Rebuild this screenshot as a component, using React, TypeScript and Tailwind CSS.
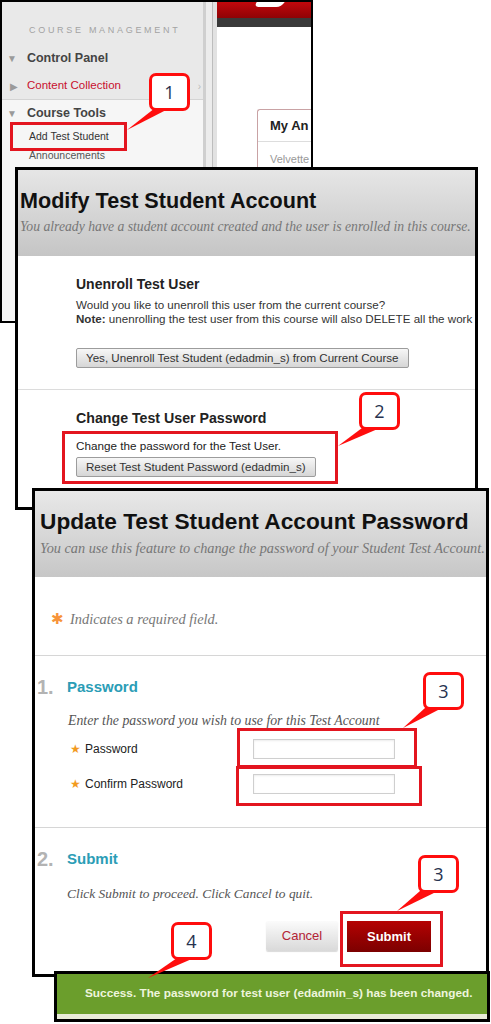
import React from "react";

const sans = "font-['Liberation_Sans',Arial,sans-serif]";
const serif = "font-['Liberation_Serif',Georgia,serif] italic";

const Callout = ({ n, className }: { n: string; className: string }) => (
  <div
    className={`absolute flex h-[38px] w-[41px] items-center justify-center rounded-[7px] border-[3px] border-[#ff0d0d] bg-white font-['Open_Sans',sans-serif] text-[18px] text-[#27324f] ${className}`}
  >
    {n}
  </div>
);

const Mark = ({ className }: { className: string }) => (
  <div className={`absolute border-[3px] border-[#e3151f] ${className}`} />
);

const GrayButton = ({ label }: { label: string }) => (
  <button className="h-[20px] rounded-[2px] border border-[#9c9c9c] bg-linear-to-b from-[#f7f7f7] to-[#d6d6d6] px-[9px] text-[11.6px] leading-[18px] whitespace-nowrap text-[#333]">
    {label}
  </button>
);

const CourseMenu = () => (
  <div className={`absolute left-0 top-0 flex h-[323px] w-[313px] border-[2.5px] border-black bg-white ${sans}`}>
    <div className="flex w-[201px] flex-col">
      <div className="h-[98px] border-b border-[#d4d4d4] bg-[#e9e9e9]">
        <p className="mt-[21px] pl-[27px] text-[9px] leading-[14px] tracking-[0.3em] text-[#a3a3a3]">COURSE MANAGEMENT</p>
        <div className="mt-[11px] flex h-[20px] items-center">
          <span className="ml-[5px] mr-[10px] text-[10px] text-[#9a9a9a]">▼</span>
          <span className="text-[12.5px] font-bold text-[#444]">Control Panel</span>
        </div>
        <div className="mt-[8px] flex h-[20px] items-center">
          <span className="ml-[8px] mr-[9px] text-[10px] text-[#9a9a9a]">▶</span>
          <span className="text-[11.5px] text-[#c8102e]">Content Collection</span>
          <span className="ml-auto mr-[2px] text-[10px] text-[#bbb]">›</span>
        </div>
      </div>
      <div className="flex-1 bg-[#f6f6f6]">
        <div className="mt-[3px] flex h-[20px] items-center">
          <span className="ml-[5px] mr-[10px] text-[10px] text-[#9a9a9a]">▼</span>
          <span className="text-[12.5px] font-bold text-[#444]">Course Tools</span>
        </div>
        <p className="mt-[4px] pl-[27px] text-[10.5px] leading-[18px] text-[#333]">Add Test Student</p>
        <p className="mt-[1px] pl-[27px] text-[10.5px] leading-[18px] text-[#555]">Announcements</p>
      </div>
    </div>
    <div className="flex w-[14px]">
      <div className="w-[3px] bg-[#cfcfcf]" />
      <div className="w-[6px] bg-[#ececec]" />
      <div className="w-[5px] border-l border-[#bdbdbd] bg-[#e2e2e2]" />
    </div>
    <div className="flex flex-1 flex-col overflow-hidden">
      <div className="relative h-[16px] bg-linear-to-b from-[#c2080c] to-[#8f0306]">
        <div className="absolute left-[38px] top-0 h-[5px] w-[28px] -skew-x-[35deg] rounded-b-full bg-white" />
      </div>
      <div className="h-[9px] bg-[#3a3a3a]" />
      <div className="ml-[40px] mt-[82px] flex flex-1 flex-col overflow-hidden rounded-tl-[3px] border-l border-t border-[#c9a2a4]">
        <div className="flex h-[32px] items-center border-b border-[#ddd] pl-[12px] text-[13px] font-bold whitespace-nowrap text-[#222]">
          My An
        </div>
        <p className="pl-[12px] pt-[9px] text-[11px] whitespace-nowrap text-[#999]">Velvette</p>
      </div>
    </div>
  </div>
);

const ModifyPanel = () => (
  <div className={`absolute left-[15px] top-[167px] flex h-[343px] w-[463px] flex-col border-[3px] border-black bg-white ${sans}`}>
    <div className="h-[86px] shrink-0 bg-linear-to-b from-[#e6e6e6] to-[#c5c5c5] pl-[2px]">
      <h1 className="pt-[19px] text-[21.6px] leading-[24px] font-bold text-[#111]">Modify Test Student Account</h1>
      <p className={`mt-[6px] text-[13.7px] leading-[16px] whitespace-nowrap text-[#777] ${serif}`}>
        You already have a student account created and the user is enrolled in this course.
      </p>
    </div>
    <div className="border-b border-[#dcdcdc] pb-[20px] pl-[58px] pt-[20px]">
      <h2 className="text-[14px] leading-[16px] font-bold text-[#222]">Unenroll Test User</h2>
      <p className="mt-[6px] text-[11.6px] leading-[14px] whitespace-nowrap text-[#333]">
        Would you like to unenroll this user from the current course?
      </p>
      <p className="text-[11.6px] leading-[14px] whitespace-nowrap text-[#333]">
        <b>Note:</b> unenrolling the test user from this course will also DELETE all the work
      </p>
      <div className="mt-[19px]">
        <GrayButton label="Yes, Unenroll Test Student (edadmin_s) from Current Course" />
      </div>
    </div>
    <div className="pl-[58px] pt-[20px]">
      <h2 className="text-[14.2px] leading-[16px] font-bold text-[#222]">Change Test User Password</h2>
      <p className="mt-[13px] text-[11.7px] leading-[14px] text-[#222]">Change the password for the Test User.</p>
      <div className="mt-[1px]">
        <GrayButton label="Reset Test Student Password (edadmin_s)" />
      </div>
    </div>
  </div>
);

const Star = () => <span className="mr-[4px] text-[12px] text-[#f29a1f]">★</span>;

const UpdatePanel = () => (
  <div className={`absolute left-[32px] top-[488px] flex h-[489px] w-[457px] flex-col border-[3px] border-black bg-white ${sans}`}>
    <div className="h-[86px] shrink-0 bg-linear-to-b from-[#e8e8e8] to-[#c7c7c7] pl-[5px]">
      <h1 className="pt-[17px] text-[22.7px] leading-[26px] font-bold whitespace-nowrap text-[#111]">Update Test Student Account Password</h1>
      <p className={`mt-[6px] text-[14.3px] leading-[16px] whitespace-nowrap text-[#777] ${serif}`}>
        You can use this feature to change the password of your Student Test Account.
      </p>
    </div>
    <div className="flex h-[79px] items-start border-b border-[#d6d6d6] pl-[16px] pt-[34px]">
      <span className="mr-[6px] text-[15px] leading-[16px] text-[#f7943a]">✱</span>
      <span className={`text-[14.4px] leading-[16px] text-[#777] ${serif}`}>Indicates a required field.</span>
    </div>
    <div className="h-[172px] border-b border-[#d6d6d6] pt-[20px]">
      <div className="flex h-[22px] items-center">
        <span className="w-[32px] pl-[2px] text-[20px] font-bold text-[#b3b3b3]">1.</span>
        <span className="text-[15px] font-bold text-[#2b9db6]">Password</span>
      </div>
      <p className={`ml-[33px] mt-[15px] text-[13.8px] leading-[16px] whitespace-nowrap text-[#555] ${serif}`}>
        Enter the password you wish to use for this Test Account
      </p>
      <div className="mt-[10px] flex h-[20px] items-center">
        <div className="ml-[35px] flex w-[183px] items-center text-[12px] text-[#222]">
          <Star />
          Password
        </div>
        <input className="h-[20px] w-[142px] border border-[#cfcfcf] bg-white shadow-[inset_0_1px_2px_rgba(0,0,0,0.08)]" />
      </div>
      <div className="mt-[15px] flex h-[20px] items-center">
        <div className="ml-[35px] flex w-[183px] items-center text-[12px] text-[#222]">
          <Star />
          Confirm Password
        </div>
        <input className="h-[20px] w-[142px] border border-[#cfcfcf] bg-white shadow-[inset_0_1px_2px_rgba(0,0,0,0.08)]" />
      </div>
    </div>
    <div className="pt-[20px]">
      <div className="flex h-[22px] items-center">
        <span className="w-[32px] pl-[2px] text-[20px] font-bold text-[#b3b3b3]">2.</span>
        <span className="text-[15px] font-bold text-[#2b9db6]">Submit</span>
      </div>
      <p className={`ml-[32px] mt-[16px] text-[13.4px] leading-[16px] text-[#555] ${serif}`}>
        Click Submit to proceed. Click Cancel to quit.
      </p>
      <div className="ml-[231px] mt-[19px] flex gap-[9px]">
        <button className="h-[30px] w-[72px] rounded-[2px] bg-linear-to-b from-[#fbfbfb] to-[#d9d9d9] text-[13px] text-[#b32436] shadow-[0_1px_1px_rgba(0,0,0,0.15)]">
          Cancel
        </button>
        <button className="h-[31px] w-[84px] bg-linear-to-b from-[#b50303] to-[#7c0000] text-[13px] font-bold text-white">
          Submit
        </button>
      </div>
    </div>
  </div>
);

const SuccessBar = () => (
  <div className={`absolute left-[54px] top-[971px] flex h-[51px] w-[436px] flex-col border-[3px] border-black ${sans}`}>
    <div className="flex flex-1 items-center bg-[#6b9e2c] pl-[28px] text-[11.8px] font-bold whitespace-nowrap text-[#eef5dc]">
      Success. The password for test user (edadmin_s) has been changed.
    </div>
    <div className="h-[5px] bg-[#e9ecd9]" />
  </div>
);

export default function App() {
  return (
    <div className="relative h-[1024px] w-[491px] overflow-hidden bg-white">
      <CourseMenu />
      <Mark className="left-[10px] top-[122px] h-[29px] w-[117px]" />
      <Callout n="1" className="left-[149px] top-[73px]" />

      <ModifyPanel />
      <Mark className="left-[62px] top-[431px] h-[53px] w-[276px]" />
      <Callout n="2" className="left-[359px] top-[392px]" />

      <UpdatePanel />
      <Mark className="left-[237px] top-[728px] h-[40px] w-[180px]" />
      <Mark className="left-[236px] top-[766px] h-[40px] w-[186px]" />
      <Mark className="left-[340px] top-[911px] h-[56px] w-[103px]" />
      <Callout n="3" className="left-[423px] top-[672px]" />
      <Callout n="3" className="left-[418px] top-[855px]" />

      <SuccessBar />
      <Callout n="4" className="left-[171px] top-[922px]" />

      <svg className="pointer-events-none absolute inset-0" width="491" height="1024" viewBox="0 0 491 1024">
        <g fill="#ff0d0d">
          <polygon points="155,108 170,108 127,130" />
          <polygon points="362,428 380,428 338,446" />
          <polygon points="425,708 442,708 403,728" />
          <polygon points="420,891 438,891 397,911" />
          <polygon points="177,958 194,958 148,978" />
        </g>
      </svg>
    </div>
  );
}
